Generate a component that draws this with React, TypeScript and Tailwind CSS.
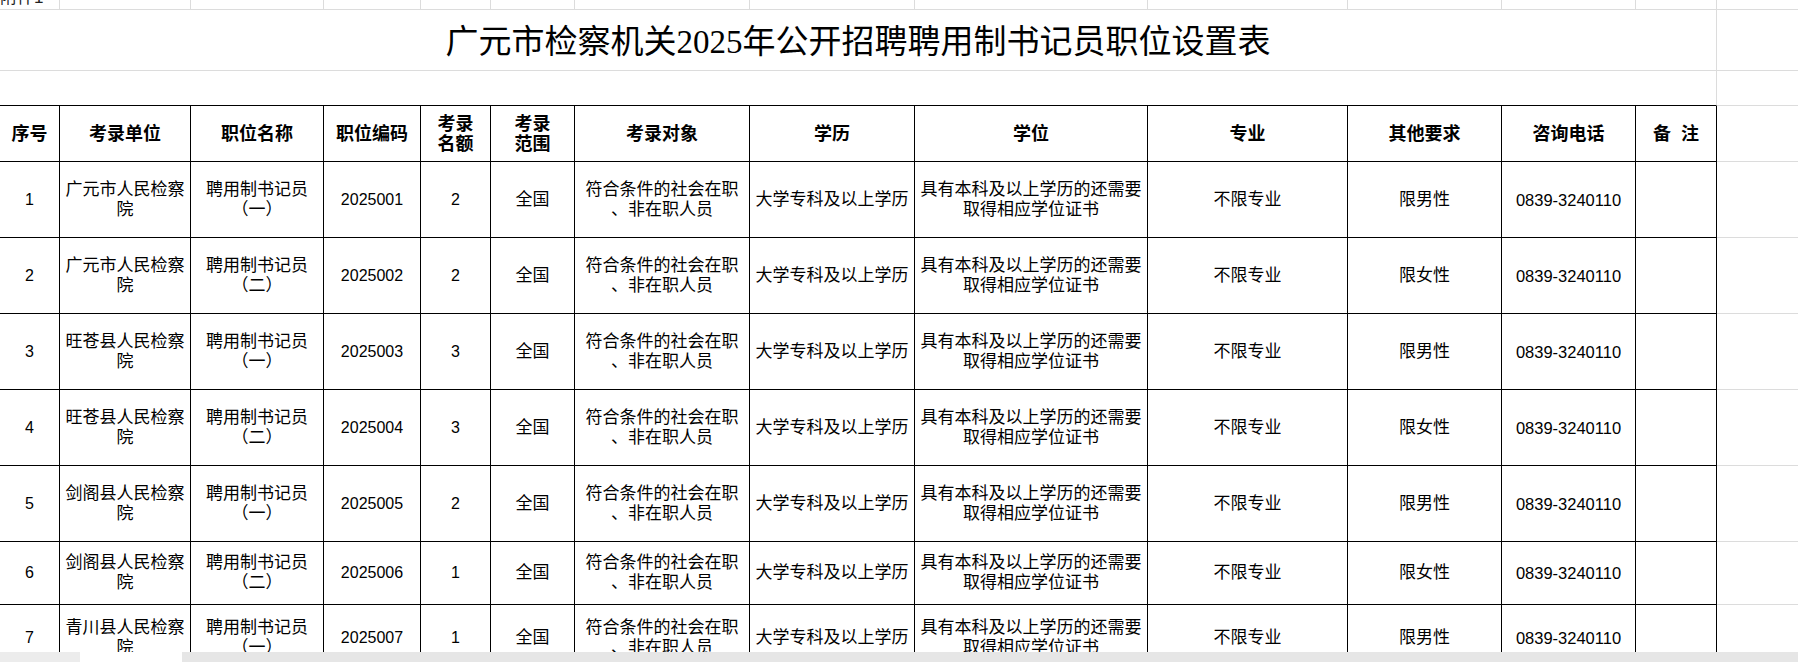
import React from 'react';

const cols = 'grid grid-cols-[60px_131px_133px_97px_70px_84px_175px_165px_233px_200px_154px_134px_81px_1fr]';
const sans = "font-['Liberation_Sans','Noto_Sans_CJK_SC',sans-serif]";

const headers: string[][] = [
  ['序号'], ['考录单位'], ['职位名称'], ['职位编码'], ['考录', '名额'], ['考录', '范围'],
  ['考录对象'], ['学历'], ['学位'], ['专业'], ['其他要求'], ['咨询电话'], ['备  注'],
];

const rows = [
  { unit: '广元市人民检察', post: '（一）', code: '2025001', n: '2', sex: '限男性', h: 'h-[76px]' },
  { unit: '广元市人民检察', post: '（二）', code: '2025002', n: '2', sex: '限女性', h: 'h-[76px]' },
  { unit: '旺苍县人民检察', post: '（一）', code: '2025003', n: '3', sex: '限男性', h: 'h-[76px]' },
  { unit: '旺苍县人民检察', post: '（二）', code: '2025004', n: '3', sex: '限女性', h: 'h-[76px]' },
  { unit: '剑阁县人民检察', post: '（一）', code: '2025005', n: '2', sex: '限男性', h: 'h-[76px]' },
  { unit: '剑阁县人民检察', post: '（二）', code: '2025006', n: '1', sex: '限女性', h: 'h-[63px]' },
  { unit: '青川县人民检察', post: '（一）', code: '2025007', n: '1', sex: '限男性', h: 'h-[66px]' },
];

function Cell({ lines, num }: { lines: string[]; num?: boolean }) {
  return (
    <div className="flex flex-col items-center justify-center text-center border-r border-b border-black overflow-hidden">
      {lines.map((l, i) => (
        <div key={i} className={`whitespace-nowrap leading-[20px] ${num ? 'text-[16px]' : 'text-[17px]'}`}>{l}</div>
      ))}
    </div>
  );
}

export default function App() {
  return (
    <div className={`w-[1798px] h-[662px] overflow-hidden bg-white text-black flex flex-col ${sans}`}>
      <div className="h-[652px] overflow-hidden">
        {/* 附件1 row, scrolled mostly out of view */}
        <div className={`${cols} h-[10px]`}>
          <div className="border-r border-b border-[#dcdcdc] overflow-hidden">
            <div className="-mt-[12px] leading-[20px] text-[17px] text-[#222] whitespace-nowrap">附件1</div>
          </div>
          {Array.from({ length: 12 }).map((_, i) => <div key={i} className="border-r border-b border-[#dcdcdc]" />)}
          <div className="border-b border-[#dcdcdc]" />
        </div>

        {/* title */}
        <div className="flex h-[61px]">
          <div className="w-[1717px] shrink-0 flex items-center justify-center pt-[4px] border-r border-b border-[#dcdcdc]">
            <span className="text-[33px] leading-none font-['Liberation_Serif','Noto_Sans_CJK_SC',serif] whitespace-nowrap">广元市检察机关2025年公开招聘聘用制书记员职位设置表</span>
          </div>
          <div className="flex-1 border-b border-[#dcdcdc]" />
        </div>

        <div className="flex h-[35px]">
          <div className="w-[1717px] shrink-0 border-r border-[#dcdcdc] border-b border-b-black" />
          <div className="flex-1 border-b border-[#dcdcdc]" />
        </div>

        {/* header */}
        <div className={`${cols} h-[56px]`}>
          {headers.map((h, i) => (
            <div key={i} className="flex flex-col items-center justify-center text-center border-r border-b border-black">
              {h.map((l, j) => <div key={j} className="text-[18px] leading-[20px] font-bold whitespace-pre">{l}</div>)}
            </div>
          ))}
          <div className="border-b border-[#dcdcdc]" />
        </div>

        {rows.map((r, i) => (
          <div key={i} className={`${cols} ${r.h}`}>
            <Cell lines={[String(i + 1)]} num />
            <Cell lines={[r.unit, '院']} />
            <Cell lines={['聘用制书记员', r.post]} />
            <Cell lines={[r.code]} num />
            <Cell lines={[r.n]} num />
            <Cell lines={['全国']} />
            <Cell lines={['符合条件的社会在职', '、非在职人员']} />
            <Cell lines={['大学专科及以上学历']} />
            <Cell lines={['具有本科及以上学历的还需要', '取得相应学位证书']} />
            <Cell lines={['不限专业']} />
            <Cell lines={[r.sex]} />
            <div className="flex items-center justify-center border-r border-b border-black">
              <span className="text-[16.5px] leading-[20px] whitespace-nowrap">0839-3240110</span>
            </div>
            <Cell lines={['']} />
            <div className="border-b border-[#dcdcdc]" />
          </div>
        ))}
      </div>

      {/* sheet tab strip */}
      <div className="h-[10px] flex bg-[#e6e6e6]">
        <div className="w-[80px] bg-[#ececec]" />
        <div className="w-[102px] bg-white" />
        <div className="flex-1" />
      </div>
    </div>
  );
}
